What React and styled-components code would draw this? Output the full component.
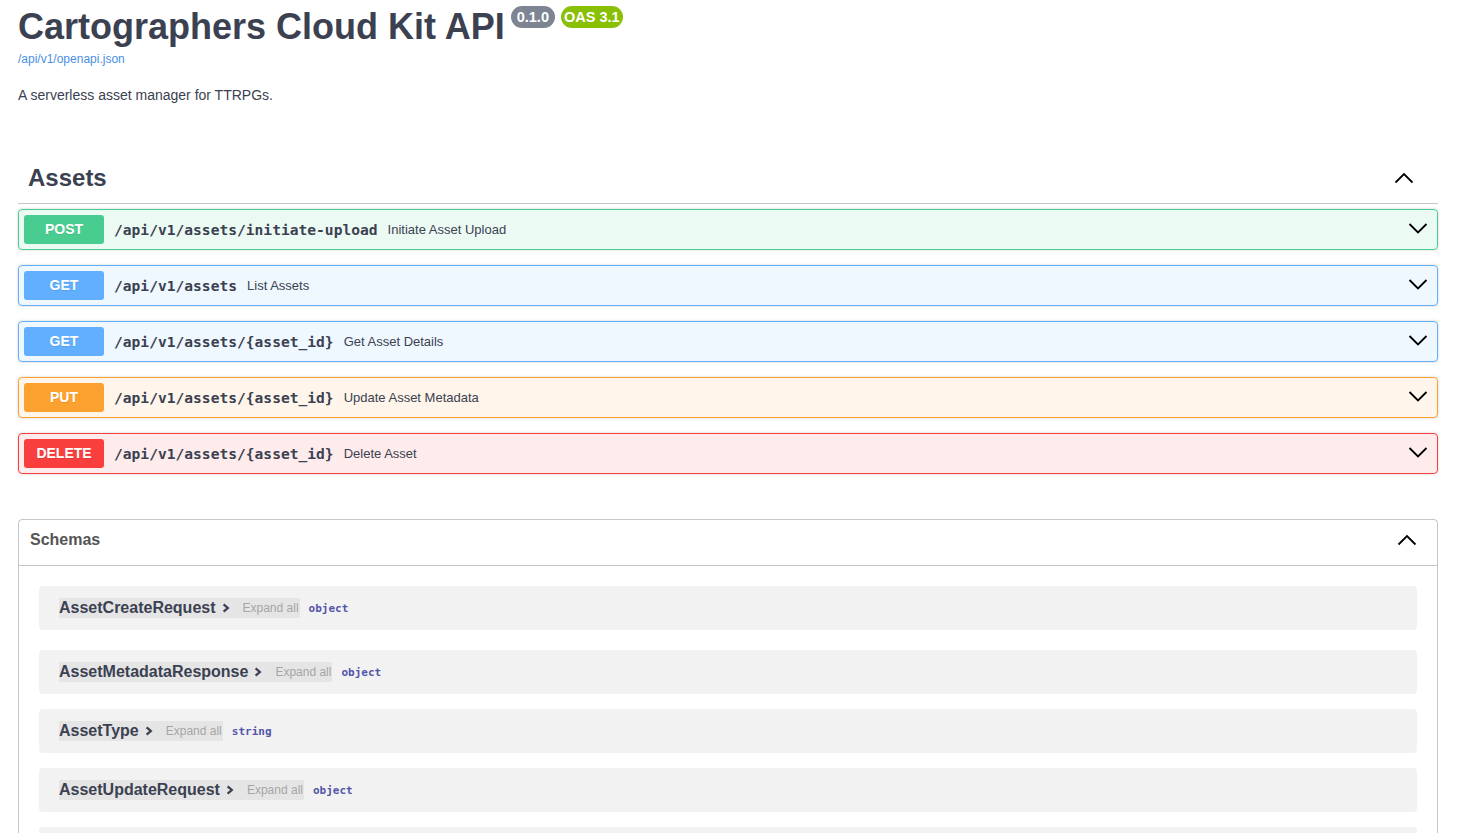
import React from "react"
import styled, { createGlobalStyle } from "styled-components"

const GlobalStyle = createGlobalStyle`
  html, body {
    margin: 0;
    padding: 0;
    background: #fff;
  }
  body {
    font-family: "Liberation Sans", Arial, sans-serif;
    color: #3b4151;
  }
`

const operations = [
  { method: "POST", path: "/api/v1/assets/initiate-upload", summary: "Initiate Asset Upload" },
  { method: "GET", path: "/api/v1/assets", summary: "List Assets" },
  { method: "GET", path: "/api/v1/assets/{asset_id}", summary: "Get Asset Details" },
  { method: "PUT", path: "/api/v1/assets/{asset_id}", summary: "Update Asset Metadata" },
  { method: "DELETE", path: "/api/v1/assets/{asset_id}", summary: "Delete Asset" },
]

const schemas = [
  { name: "AssetCreateRequest", type: "object" },
  { name: "AssetMetadataResponse", type: "object" },
  { name: "AssetType", type: "string" },
  { name: "AssetUpdateRequest", type: "object" },
  { name: "HTTPValidationError", type: "object" },
  { name: "ValidationError", type: "object" },
]

const methodColors = {
  POST: { main: "#49cc90", bg: "rgba(73, 204, 144, 0.1)" },
  GET: { main: "#61affe", bg: "rgba(97, 175, 254, 0.1)" },
  PUT: { main: "#fca130", bg: "rgba(252, 161, 48, 0.1)" },
  DELETE: { main: "#f93e3e", bg: "rgba(249, 62, 62, 0.1)" },
}

const ChevronUp = () => (
  <svg width="20" height="20" viewBox="0 0 20 20">
    <polyline points="1.5,14.5 10,6 18.5,14.5" fill="none" stroke="#000" strokeWidth="1.8" />
  </svg>
)

const ChevronDown = () => (
  <svg width="20" height="20" viewBox="0 0 20 20">
    <polyline points="1.5,4 10,12.5 18.5,4" fill="none" stroke="#000" strokeWidth="1.8" />
  </svg>
)

const ArrowRight = () => (
  <svg width="8" height="10" viewBox="0 0 8 10">
    <polyline points="1.6,1.4 5.8,5 1.6,8.6" fill="none" stroke="#3b4151" strokeWidth="2.3" />
  </svg>
)

const App = () => {
  return (
    <Wrapper>
      <GlobalStyle />
      <Info>
        <TitleRow>
          <Title>Cartographers Cloud Kit API</Title>
          <Badges>
            <Badge color="#7d8492" pad={6}>0.1.0</Badge>
            <Badge color="#89bf04" pad={3}>OAS 3.1</Badge>
          </Badges>
        </TitleRow>
        <SpecLink href="#">/api/v1/openapi.json</SpecLink>
        <Description>A serverless asset manager for TTRPGs.</Description>
      </Info>

      <TagSection>
        <TagHeader>
          <TagTitle>Assets</TagTitle>
          <ChevronUp />
        </TagHeader>
        {operations.map((op, i) => (
          <OpBlock key={i} method={op.method}>
            <MethodBadge method={op.method}>{op.method}</MethodBadge>
            <OpPath>{op.path}</OpPath>
            <OpSummary>{op.summary}</OpSummary>
            <OpToggle>
              <ChevronDown />
            </OpToggle>
          </OpBlock>
        ))}
      </TagSection>

      <Models>
        <ModelsHeader>
          <ModelsTitle>Schemas</ModelsTitle>
          <ChevronUp />
        </ModelsHeader>
        <ModelsList>
          {schemas.map((s) => (
            <ModelContainer key={s.name}>
              <ModelToggle>
                <ModelName>{s.name}</ModelName>
                <ArrowRight />
              </ModelToggle>
              <ExpandAll>Expand all</ExpandAll>
              <ModelType>{s.type}</ModelType>
            </ModelContainer>
          ))}
        </ModelsList>
      </Models>
    </Wrapper>
  )
}

export default App

const Wrapper = styled.div`
  padding: 0 24px 0 18px;
`
const Info = styled.div`
  padding-top: 6px;
`
const TitleRow = styled.div`
  display: flex;
  align-items: flex-start;
`
const Title = styled.h2`
  margin: 0;
  font-size: 36px;
  line-height: 41px;
  font-weight: bold;
  color: #3b4151;
`
const Badges = styled.div`
  display: flex;
  gap: 6px;
  margin-left: 6px;
`
const Badge = styled.span`
  display: inline-block;
  padding: 2px ${(p) => p.pad}px;
  border-radius: 57px;
  background: ${(p) => p.color};
  color: #fff;
  font-size: 14.5px;
  line-height: 18px;
  font-weight: bold;
`
const SpecLink = styled.a`
  display: block;
  margin-top: 5px;
  font-size: 12px;
  line-height: 14px;
  color: #4990e2;
  text-decoration: none;
`
const Description = styled.p`
  margin: 21px 0 0;
  font-size: 14px;
  line-height: 17px;
  color: #3b4151;
`
const TagSection = styled.div`
  margin-top: 50px;
`
const TagHeader = styled.div`
  display: flex;
  align-items: center;
  justify-content: space-between;
  padding: 10px 24px 11px 10px;
  margin-bottom: 5px;
  border-bottom: 1px solid rgba(59, 65, 81, 0.3);
`
const TagTitle = styled.h3`
  margin: 0;
  font-size: 24px;
  line-height: 28px;
  font-weight: bold;
  color: #3b4151;
`
const OpBlock = styled.div`
  display: flex;
  align-items: center;
  padding: 5px;
  margin-bottom: 15px;
  border: 1px solid ${(p) => methodColors[p.method].main};
  border-radius: 4px;
  background: ${(p) => methodColors[p.method].bg};
  box-shadow: 0 0 3px rgba(0, 0, 0, 0.19);
`
const MethodBadge = styled.span`
  min-width: 80px;
  padding: 6px 0;
  border-radius: 3px;
  background: ${(p) => methodColors[p.method].main};
  color: #fff;
  font-size: 14px;
  line-height: 17px;
  font-weight: bold;
  text-align: center;
  text-shadow: 0 1px 0 rgba(0, 0, 0, 0.1);
`
const OpPath = styled.span`
  padding: 0 10px;
  font-family: "DejaVu Sans Mono", monospace;
  font-size: 14.6px;
  font-weight: bold;
  color: #3b4151;
`
const OpSummary = styled.span`
  flex: 1;
  font-size: 13px;
  color: #3b4151;
`
const OpToggle = styled.span`
  display: flex;
  margin-right: 4px;
`
const Models = styled.section`
  margin-top: 45px;
  border: 1px solid rgba(59, 65, 81, 0.3);
  border-radius: 4px;
`
const ModelsHeader = styled.div`
  display: flex;
  align-items: center;
  justify-content: space-between;
  padding: 7px 20px 13px 11px;
  border-bottom: 1px solid rgba(59, 65, 81, 0.3);
`
const ModelsTitle = styled.h4`
  margin: 0;
  font-size: 16px;
  line-height: 25px;
  font-weight: bold;
  color: #555;
`
const ModelsList = styled.div`
  padding-top: 20px;
`
const ModelContainer = styled.div`
  display: flex;
  align-items: center;
  height: 44px;
  margin: 0 20px 15px;
  padding: 0 20px;
  border-radius: 4px;
  background: rgba(0, 0, 0, 0.05);

  &:first-child {
    margin-bottom: 20px;
  }
`
const ModelToggle = styled.span`
  display: inline-flex;
  align-items: center;
  gap: 6px;
  height: 20px;
  padding-right: 9px;
  background: rgba(0, 0, 0, 0.05);
`
const ModelName = styled.span`
  font-size: 16px;
  line-height: 20px;
  font-weight: bold;
  color: #3b4151;
`
const ExpandAll = styled.span`
  height: 20px;
  padding: 0 1px 0 4px;
  background: rgba(0, 0, 0, 0.05);
  font-size: 12px;
  line-height: 20px;
  color: #a5a5a5;
`
const ModelType = styled.span`
  margin-left: 9px;
  font-family: "DejaVu Sans Mono", monospace;
  font-size: 11px;
  font-weight: bold;
  color: #55a;
`
